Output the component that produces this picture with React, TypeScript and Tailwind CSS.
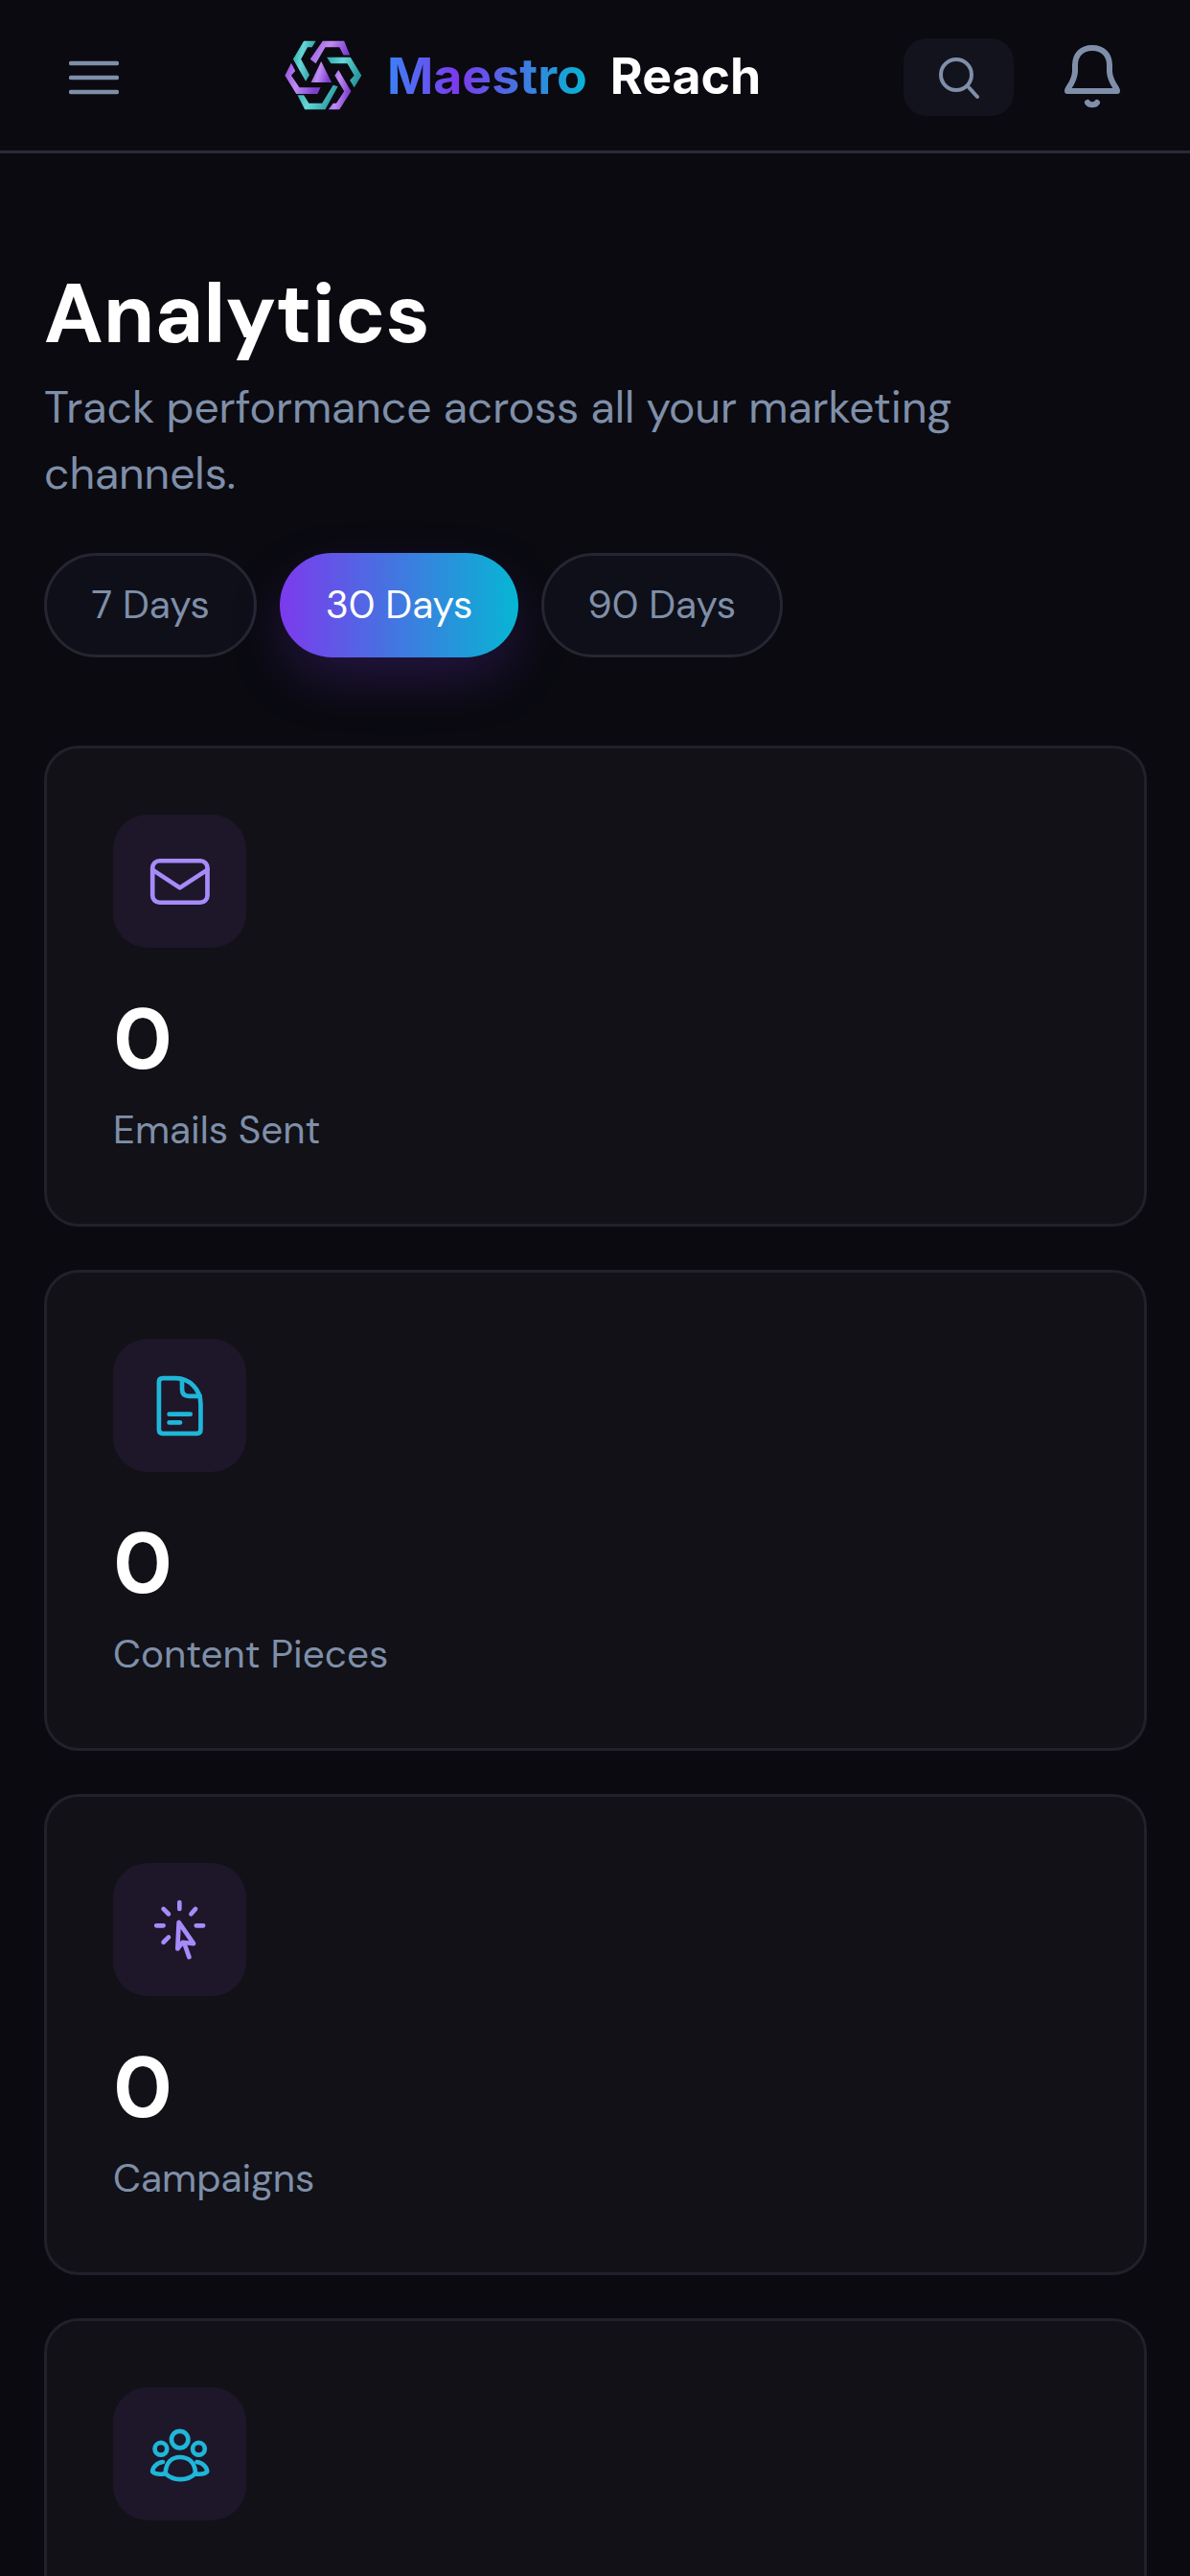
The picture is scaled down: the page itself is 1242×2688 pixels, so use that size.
const sans = "font-['DM_Sans','Inter',sans-serif]";

function Logo() {
  return (
    <svg width="81" height="73" viewBox="52 38 244 222" className="shrink-0">
      <defs>
        <linearGradient id="teal" x1="0" y1="0" x2="1" y2="0.3">
          <stop offset="0" stopColor="#2aa8aa" />
          <stop offset="0.45" stopColor="#66d6d6" />
          <stop offset="1" stopColor="#2a9aa0" />
        </linearGradient>
        <linearGradient id="purple" x1="0" y1="0" x2="1" y2="0.3">
          <stop offset="0" stopColor="#8f4fe0" />
          <stop offset="0.5" stopColor="#c08cf2" />
          <stop offset="1" stopColor="#7e3fd0" />
        </linearGradient>
      </defs>
      <polygon fill="url(#teal)" points="112,40 150,40 138,60 124,60 103,98 130,148 118,168 78,98" />
      <polygon fill="url(#purple)" points="172,40 240,40 258,85 238,85 225,60 180,60 150,112 132,98" />
      <polygon fill="url(#teal)" points="185,92 260,92 295,150 272,188 258,165 272,150 250,112 198,112" />
      <polygon fill="url(#purple)" points="222,132 262,200 225,258 190,258 205,238 215,238 240,200 210,150" />
      <polygon fill="url(#teal)" points="92,212 112,212 128,238 170,238 205,180 220,185 180,258 115,258" />
      <polygon fill="url(#purple)" points="72,110 85,135 72,150 98,188 165,188 155,208 88,208 52,150" />
      <polygon fill="url(#purple)" points="167,105 200,172 135,172" />
    </svg>
  );
}

function Header() {
  return (
    <header className="h-[160px] border-b-[3px] border-[#2a2a3a] flex items-center pl-[72px]">
      <svg width="52" height="36" viewBox="0 0 52 36" className="shrink-0 mt-[4px]">
        <g stroke="#7f8fa9" strokeWidth="4.5" strokeLinecap="round">
          <path d="M2 3H50" />
          <path d="M2 18H50" />
          <path d="M2 33H50" />
        </g>
      </svg>
      <div className="ml-[173px]">
        <Logo />
      </div>
      <div className="ml-[26px] flex text-[51.8px] font-bold leading-[60px] font-['Inter',sans-serif] w-[400px] whitespace-nowrap">
        <span className="bg-[linear-gradient(90deg,#3b82f6,#7c3aed_35%,#06b6d4)] bg-clip-text text-transparent">Maestro</span>
        <span className="ml-[24px] text-white">Reach</span>
      </div>
      <div className="ml-[139px] mt-[4px] w-[115px] h-[81px] rounded-[24px] bg-[#12131c] flex items-center justify-center shrink-0">
        <svg width="46" height="46" viewBox="0 0 46 46" fill="none" stroke="#7f8fa9" strokeWidth="4" strokeLinecap="round">
          <circle cx="20" cy="20" r="16" />
          <path d="M32 32L42 43" />
        </svg>
      </div>
      <div className="ml-[52px] mt-[2px] shrink-0">
        <svg width="60" height="66" viewBox="0 0 60 66" fill="none" stroke="#7f8fa9" strokeWidth="6" strokeLinecap="round" strokeLinejoin="round">
          <path d="M4 48C4 44 11 40 12 28V21C12 10 19 3 30 3C41 3 48 10 48 21V28C49 40 56 44 56 48Z" />
          <path d="M25 60C27 63 33 63 35 60" />
        </svg>
      </div>
    </header>
  );
}

function Pill({ label, active, pad }: { label: string; active?: boolean; pad: string }) {
  if (active) {
    return (
      <div className={`h-[109px] pt-[2px] ${pad} rounded-full bg-[linear-gradient(90deg,#7c3aed,#06b6d4)] flex items-center justify-center text-white text-[40.5px] shadow-[0_24px_60px_-6px_rgba(124,58,237,0.25)] ${sans}`}>
        {label}
      </div>
    );
  }
  return (
    <div className={`h-[109px] pt-[2px] ${pad} rounded-full border-[3px] border-[#252632] bg-[#0e0f18] flex items-center justify-center text-[#7f8fa9] text-[40.5px] ${sans}`}>
      {label}
    </div>
  );
}

function IconBox({ viewBox, color, children }: { viewBox: string; color: string; children: React.ReactNode }) {
  return (
    <div className="w-[139px] h-[139px] rounded-[36px] bg-[#1d1729]">
      <svg width="139" height="139" viewBox={viewBox} fill="none" stroke={color} strokeWidth="14" strokeLinecap="round" strokeLinejoin="round">
        {children}
      </svg>
    </div>
  );
}

function Card({ icon, label }: { icon: React.ReactNode; label?: string }) {
  return (
    <section className="h-[502px] shrink-0 rounded-[36px] border-[3px] border-[#20212a] bg-[#111117] pl-[69px] pt-[69px]">
      {icon}
      {label && (
        <>
          <div className={`mt-[51px] text-[88px] leading-[90px] font-bold text-white ${sans}`}>0</div>
          <div className={`mt-[20px] text-[40.5px] leading-[60px] text-[#7f8fa9] ${sans}`}>{label}</div>
        </>
      )}
    </section>
  );
}

export default function App() {
  return (
    <div className="h-[2688px] w-[1242px] overflow-hidden bg-[#0a0a10]">
      <Header />
      <main className="pl-[46px] pr-[45px] pt-[120px] flex flex-col">
        <h1 className={`text-[87px] leading-[96px] font-bold text-white ${sans}`}>Analytics</h1>
        <p className={`mt-[15px] text-[46.2px] leading-[68.5px] text-[#7f8fa9] w-[1000px] ${sans}`}>
          Track performance across all your marketing channels.
        </p>
        <div className="mt-[49px] flex gap-[24px]">
          <Pill label="7 Days" pad="px-[46.5px]" />
          <Pill label="30 Days" active pad="px-[47.5px]" />
          <Pill label="90 Days" pad="px-[45.5px]" />
        </div>
        <div className="mt-[92px] flex flex-col gap-[45px]">
          <Card
            label="Emails Sent"
            icon={
              <IconBox viewBox="55 60 415 415" color="#a78bfa">
                <rect x="178" y="204" width="171" height="130" rx="22" />
                <path d="M178 232L263 288L349 232" />
              </IconBox>
            }
          />
          <Card
            label="Content Pieces"
            icon={
              <IconBox viewBox="55 55 415 415" color="#1fb6d9">
                <path d="M198 190Q198 178 210 178H250C295 178 328 215 328 258V338Q328 350 316 350H210Q198 350 198 338Z" />
                <path d="M270 182V212Q270 234 292 234H326" />
                <path d="M230 290H296" />
                <path d="M230 316H264" />
              </IconBox>
            }
          />
          <Card
            label="Campaigns"
            icon={
              <IconBox viewBox="55 65 415 415" color="#a78bfa">
                <path d="M262 188V208M212 208L228 224M312 208L298 224M190 260H212M314 260H336M212 312L228 296" />
                <path d="M260 250L256 332L272 312L306 316Z" />
                <path d="M278 318L292 358" />
              </IconBox>
            }
          />
          <Card
            icon={
              <IconBox viewBox="55 72 415 415" color="#1fb6d9">
                <circle cx="263" cy="235" r="26" />
                <circle cx="204" cy="264" r="19" />
                <circle cx="322" cy="264" r="19" />
                <path d="M218 340C220 305 240 290 263 290C290 290 310 305 312 340C290 365 240 365 218 340Z" />
                <path d="M210 305C190 308 178 322 178 335C185 342 200 344 216 342" />
                <path d="M316 305C336 308 348 322 348 335C341 342 326 344 310 342" />
              </IconBox>
            }
          />
        </div>
      </main>
    </div>
  );
}
